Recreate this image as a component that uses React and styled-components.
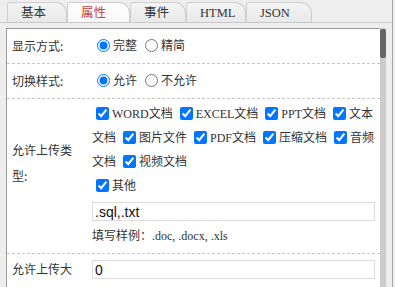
import React from "react";
import styled, { createGlobalStyle } from "styled-components";

const Global = createGlobalStyle`
  html, body { margin: 0; padding: 0; }
  body {
    background: #eeeeee;
    font-family: "Liberation Serif", "Noto Sans CJK SC", serif;
    font-size: 12px;
    color: #333;
    overflow: hidden;
  }
`;

const Frame = styled.div`
  width: 393px;
  height: 287px;
  box-sizing: border-box;
  border-right: 1px solid #a8a8a8;
  display: flex;
  flex-direction: column;
`;

const TabBar = styled.div`
  display: flex;
  align-items: flex-end;
  height: 20px;
  padding: 2px 0 0 7px;
  border-bottom: 1px solid #c8c8c8;
`;

const Tab = styled.div`
  box-sizing: border-box;
  width: ${(p) => p.$w}px;
  height: 20px;
  line-height: 20px;
  padding-left: 13px;
  border: 1px solid #cfcfcf;
  border-bottom: none;
  border-radius: 3px 11px 0 0;
  background: ${(p) => (p.$active ? "linear-gradient(#ffffff, #f7f7f7)" : "linear-gradient(#f3f3f3, #e9e9e9)")};
  color: ${(p) => (p.$active ? "#cc4040" : "#333")};
  font-size: 12.5px;
  white-space: nowrap;
`;

const Panel = styled.div`
  flex: 1;
  display: flex;
  margin: 5px 6px 0 6px;
  min-height: 0;
`;

const Content = styled.div`
  flex: 1;
  background: #fff;
  border-top: 1px solid #999;
  border-left: 1px solid #999;
  overflow: hidden;
`;

const ScrollTrack = styled.div`
  width: 6px;
  background: #cccccc;
  display: flex;
  flex-direction: column;
`;

const Thumb = styled.div`
  height: 29px;
  margin-top: 1px;
  background: #666;
  border-radius: 2px;
`;

const Row = styled.div`
  display: grid;
  grid-template-columns: 80px 1fr;
  border-bottom: 1px dashed #c8c8c8;
`;

const Label = styled.div`
  box-sizing: border-box;
  padding: ${(p) => p.$pad || "0"} 5px ${(p) => p.$padBottom || "0"} 5px;
  line-height: 26px;
  align-self: ${(p) => p.$align || "center"};
  font-family: "Noto Sans CJK SC", sans-serif;
  font-size: 12px;
  color: #333;
`;

const Cell = styled.div`
  padding: ${(p) => p.$pad || "4px 5px 4px 5px"};
  min-height: 26px;
  line-height: 26px;
`;

const Choice = styled.label`
  font-family: "Liberation Serif", "Noto Sans CJK SC", serif;
  color: #333;
  input { vertical-align: -2px; }
`;

const Checks = styled.div`
  line-height: 24px;
`;

const TextInput = styled.input`
  display: block;
  box-sizing: border-box;
  width: 100%;
  height: 19px;
  margin: ${(p) => p.$m || "0"};
  padding: 0 2px;
  border: 1px solid #dcdcdc;
  font-family: "Liberation Sans", Arial, sans-serif;
  font-size: 14px;
  color: #111;
  outline: none;
`;

const Hint = styled.div`
  font-size: 12px;
  line-height: 20px;
  margin-top: 5px;
  color: #333;
`;

const types = ["WORD文档", "EXCEL文档", "PPT文档", "文本文档", "图片文件", "PDF文档", "压缩文档", "音频文档", "视频文档"];

export default function App() {
  return (
    <>
      <Global />
      <Frame>
        <TabBar>
          <Tab $w={60}>基本</Tab>
          <Tab $w={63} $active>属性</Tab>
          <Tab $w={56}>事件</Tab>
          <Tab $w={60}>HTML</Tab>
          <Tab $w={66}>JSON</Tab>
        </TabBar>
        <Panel>
          <Content>
            <Row>
              <Label>显示方式:</Label>
              <Cell>
                <Choice><input type="radio" name="show" defaultChecked />完整</Choice>{" "}
                <Choice><input type="radio" name="show" />精简</Choice>
              </Cell>
            </Row>
            <Row>
              <Label>切换样式:</Label>
              <Cell>
                <Choice><input type="radio" name="sw" defaultChecked />允许</Choice>{" "}
                <Choice><input type="radio" name="sw" />不允许</Choice>
              </Cell>
            </Row>
            <Row>
              <Label $padBottom="26px">允许上传类型:</Label>
              <Cell $pad="3px 5px 7px 5px">
                <Checks>
                  {types.map((t, i) => (
                    <React.Fragment key={t}>
                      <Choice><input type="checkbox" defaultChecked />{t}</Choice>{i < types.length - 1 ? " " : ""}
                    </React.Fragment>
                  ))}
                </Checks>
                <Checks>
                  <Choice><input type="checkbox" defaultChecked />其他</Choice>
                </Checks>
                <TextInput $m="4px 0 0 0" defaultValue=".sql,.txt" />
                <Hint>填写样例：.doc, .docx, .xls</Hint>
              </Cell>
            </Row>
            <Row>
              <Label $align="start" $pad="2px">允许上传大小:</Label>
              <Cell $pad="6px 5px 6px 5px">
                <TextInput defaultValue="0" />
              </Cell>
            </Row>
          </Content>
          <ScrollTrack>
            <Thumb />
          </ScrollTrack>
        </Panel>
      </Frame>
    </>
  );
}
